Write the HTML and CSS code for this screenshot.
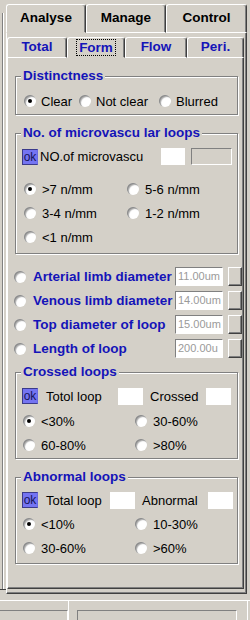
FILE: index.html
```html
<!DOCTYPE html>
<html>
<head>
<meta charset="utf-8">
<title>Form</title>
<link rel="stylesheet" href="styles.css">
</head>
<body>
<div class="app">
  <div class="main">
    <div class="side"><div class="side-frame"></div></div>
    <div class="outer">
      <div class="tabs outer-tabs">
        <div class="tab sel">Analyse</div>
        <div class="tab">Manage</div>
        <div class="tab">Control</div>
      </div>
      <div class="outer-body">
        <div class="inner">
          <div class="tabs inner-tabs">
            <div class="tab">Total</div>
            <div class="tab sel"><span class="focus">Form</span></div>
            <div class="tab">Flow</div>
            <div class="tab">Peri.</div>
          </div>
          <div class="inner-body">

            <div class="group g1">
              <div class="gtitle"><span>Distinctness</span></div>
              <div class="rrow">
                <span class="ritem w55"><i class="radio on"></i>Clear</span>
                <span class="ritem w80"><i class="radio"></i>Not clear</span>
                <span class="ritem"><i class="radio"></i>Blurred</span>
              </div>
            </div>

            <div class="group g2">
              <div class="gtitle"><span>No. of microvascu lar loops</span></div>
              <div class="okrow">
                <span class="ok">ok</span>
                <span class="oklabel lbl-micro">NO.of microvascu</span>
                <span class="wbox wb24"></span>
                <span class="gbox"></span>
              </div>
              <div class="rgrid grid103">
                <span class="ritem"><i class="radio on"></i>&gt;7 n/mm</span>
                <span class="ritem"><i class="radio"></i>5-6 n/mm</span>
                <span class="ritem"><i class="radio"></i>3-4 n/mm</span>
                <span class="ritem"><i class="radio"></i>1-2 n/mm</span>
                <span class="ritem"><i class="radio"></i>&lt;1 n/mm</span>
              </div>
            </div>

            <div class="drows">
              <div class="drow">
                <i class="radio"></i><span class="dlabel">Arterial limb diameter</span>
                <span class="dinput">11.00um</span><span class="dbtn"></span>
              </div>
              <div class="drow">
                <i class="radio"></i><span class="dlabel">Venous limb diameter</span>
                <span class="dinput">14.00um</span><span class="dbtn"></span>
              </div>
              <div class="drow">
                <i class="radio"></i><span class="dlabel">Top diameter of loop</span>
                <span class="dinput">15.00um</span><span class="dbtn"></span>
              </div>
              <div class="drow">
                <i class="radio"></i><span class="dlabel">Length of loop</span>
                <span class="dinput">200.00u</span><span class="dbtn"></span>
              </div>
            </div>

            <div class="group g3">
              <div class="gtitle"><span>Crossed loops</span></div>
              <div class="okrow">
                <span class="ok">ok</span>
                <span class="oklabel lbl-totol">Totol loop</span>
                <span class="wbox"></span>
                <span class="oklabel lbl-crossed">Crossed</span>
                <span class="wbox"></span>
              </div>
              <div class="rgrid grid112">
                <span class="ritem"><i class="radio on"></i>&lt;30%</span>
                <span class="ritem"><i class="radio"></i>30-60%</span>
                <span class="ritem"><i class="radio"></i>60-80%</span>
                <span class="ritem"><i class="radio"></i>&gt;80%</span>
              </div>
            </div>

            <div class="group g4">
              <div class="gtitle"><span>Abnormal loops</span></div>
              <div class="okrow">
                <span class="ok">ok</span>
                <span class="oklabel lbl-total">Total loop</span>
                <span class="wbox"></span>
                <span class="oklabel lbl-abn">Abnormal</span>
                <span class="wbox"></span>
              </div>
              <div class="rgrid grid112">
                <span class="ritem"><i class="radio on"></i>&lt;10%</span>
                <span class="ritem"><i class="radio"></i>10-30%</span>
                <span class="ritem"><i class="radio"></i>30-60%</span>
                <span class="ritem"><i class="radio"></i>&gt;60%</span>
              </div>
            </div>

          </div>
        </div>
      </div>
    </div>
  </div>
  <div class="status">
    <div class="sec1"><div class="panel"></div></div>
    <div class="sec2"><div class="panel"></div></div>
    <div class="sec3"></div>
  </div>
</div>
</body>
</html>
```
FILE: styles.css
```css
* { box-sizing: border-box; }
html, body { margin: 0; padding: 0; }
body {
  background: #d4d0c8;
  font-family: "Liberation Sans", Arial, sans-serif;
  font-size: 13px;
  color: #000;
  width: 250px;
  height: 620px;
  overflow: hidden;
}
.app { width: 250px; height: 620px; display: flex; flex-direction: column; }
.main { height: 600px; display: flex; align-items: flex-start; }

/* left partial frame */
.side { width: 6px; height: 590px; padding-top: 13px; border-bottom: 1px solid #404040; flex-shrink: 0; }
.side-frame { width: 3px; height: 100%; border-right: 1px solid #808080; box-shadow: 1px 0 0 #fff; }

/* tab controls */
.outer { width: 241px; height: 594px; padding-top: 4px; display: flex; flex-direction: column; flex-shrink: 0; }
.tabs { display: flex; flex-shrink: 0; }
.tab {
  border: 1px solid;
  border-color: #fff #404040 #fff #fff;
  border-radius: 3px 3px 0 0;
  box-shadow: inset -1px 0 0 #808080;
  text-align: center;
  font-weight: bold;
  font-size: 13.5px;
  white-space: nowrap;
  flex-shrink: 0;
}
.tab.sel { border-bottom-color: #d4d0c8; }
.outer-tabs { height: 29px; }
.outer-tabs .tab { line-height: 26px; }
.outer-tabs .tab:nth-child(1) { width: 80px; }
.outer-tabs .tab:nth-child(2) { width: 80px; }
.outer-tabs .tab:nth-child(3) { width: 81px; }

.outer-body {
  flex: 1;
  border-left: 1px solid #fff;
  border-right: 1px solid #404040;
  border-bottom: 1px solid #404040;
  box-shadow: inset -1px -1px 0 #808080;
  padding: 4px 2px 4px 0;
}
.inner { height: 100%; display: flex; flex-direction: column; }
.inner-tabs { height: 21px; }
.inner-tabs .tab { line-height: 17px; color: #1414b8; }
.inner-tabs .tab:nth-child(1) { width: 60px; }
.inner-tabs .tab:nth-child(2) { width: 58px; }
.inner-tabs .tab:nth-child(3) { width: 62px; }
.inner-tabs .tab:nth-child(4) { width: 57px; }
.focus { display: inline-block; outline: 1px dotted #000; padding: 0 2px; line-height: 15px; margin-top: 2px; color: #1414b8; }

.inner-body {
  flex: 1;
  border-left: 1px solid #fff;
  border-right: 1px solid #404040;
  border-bottom: 1px solid #404040;
  box-shadow: inset -1px -1px 0 #808080;
  padding: 0 4px 0 6px;
}

/* group boxes */
.group {
  border: 1px solid #808080;
  box-shadow: inset 1px 1px 0 #fff, 1px 1px 0 #fff;
  margin-left: 1px;
  margin-right: 1px;
}
.gtitle { margin-top: -9px; height: 16px; line-height: 16px; padding-left: 5px; }
.gtitle span {
  display: inline-block;
  height: 16px;
  background: #d4d0c8;
  padding: 0 2px;
  color: #1414b8;
  font-weight: bold;
  font-size: 13.5px;
  white-space: nowrap;
}
.g1 { margin-top: 18px; padding-bottom: 5px; }
.g2 { margin-top: 18px; padding-bottom: 8px; }
.g3 { margin-top: 14px; padding-bottom: 5px; }
.g4 { margin-top: 18px; padding-bottom: 7px; }

/* radios */
.radio {
  display: inline-block;
  position: relative;
  width: 12px;
  height: 12px;
  border-radius: 50%;
  background: #fff;
  box-shadow: inset 1px 1px 0 #8c8c8c, inset 2px 2px 1px #b0b0b0;
  flex-shrink: 0;
}
.radio.on::after {
  content: "";
  position: absolute;
  left: 4px;
  top: 4px;
  width: 4px;
  height: 4px;
  border-radius: 50%;
  background: #000;
}
.ritem { display: flex; align-items: center; white-space: nowrap; height: 16px; }
.ritem .radio { margin-right: 5px; }
.w55 { width: 55px; }
.w80 { width: 80px; }
.rrow { display: flex; margin-top: 9px; padding-left: 8px; height: 16px; }

.rgrid { display: grid; row-gap: 8px; grid-auto-rows: 16px; }
.grid103 { grid-template-columns: 103px 1fr; margin-top: 16px; padding-left: 8px; }
.grid103 .ritem .radio { margin-right: 6px; }
.grid112 { grid-template-columns: 112px 1fr; padding-left: 7px; }
.grid112 .ritem .radio { margin-right: 6px; }
.g3 .grid112 { margin-top: 9px; }
.g4 .grid112 { margin-top: 8px; }

/* ok rows */
.okrow { display: flex; align-items: center; padding-left: 6px; }
.g2 .okrow { margin-top: 7px; height: 17px; }
.g3 .okrow { margin-top: 8px; height: 16px; }
.g4 .okrow { margin-top: 7px; height: 16px; }
.ok {
  width: 16px;
  height: 16px;
  background: #7474f2;
  border: 1px solid #3a3a8a;
  border-right-color: #6a6ae0;
  color: #14145a;
  font-size: 12px;
  line-height: 14px;
  text-align: center;
  flex-shrink: 0;
}
.oklabel { white-space: nowrap; flex-shrink: 0; }
.lbl-micro { width: 121px; margin-left: 2px; }
.lbl-totol { width: 72px; margin-left: 8px; }
.lbl-crossed { width: 56px; margin-left: 7px; }
.lbl-total { width: 64px; margin-left: 8px; }
.lbl-abn { width: 66px; margin-left: 7px; }
.wbox { width: 25px; height: 17px; background: #fff; flex-shrink: 0; }
.wb24 { width: 24px; }
.gbox {
  width: 41px;
  height: 17px;
  margin-left: 6px;
  border: 1px solid;
  border-color: #808080 #fff #fff #808080;
  flex-shrink: 0;
}

/* diameter rows */
.drows { margin-top: 13px; display: flex; flex-direction: column; gap: 5px; }
.drow { display: flex; align-items: center; height: 19px; }
.dlabel {
  width: 142px;
  margin-left: 7px;
  color: #1414b8;
  font-weight: bold;
  font-size: 13.5px;
  white-space: nowrap;
  flex-shrink: 0;
}
.dinput {
  width: 48px;
  height: 19px;
  background: #fff;
  border: 1px solid;
  border-color: #808080 #fff #fff #808080;
  color: #9a9a9a;
  font-size: 11px;
  line-height: 17px;
  padding-left: 2px;
  overflow: hidden;
  white-space: nowrap;
  flex-shrink: 0;
}
.dbtn {
  width: 14px;
  height: 19px;
  margin-left: 5px;
  border: 1px solid;
  border-color: #fff #404040 #404040 #fff;
  box-shadow: inset -1px -1px 0 #808080;
  flex-shrink: 0;
}

/* status bar */
.status { height: 20px; display: flex; border-top: 1px solid #fff; }
.sec1 { width: 68px; padding-top: 9px; }
.sec1 .panel { height: 100%; border-top: 1px solid #808080; border-right: 1px solid #fff; }
.sec2 { width: 179px; border-left: 1px solid #fff; padding: 9px 10px 0 8px; }
.sec2 .panel { height: 100%; border-top: 1px solid #808080; border-left: 1px solid #808080; border-right: 1px solid #fff; }
.sec3 { flex: 1; border-left: 1px solid #fff; }
```
